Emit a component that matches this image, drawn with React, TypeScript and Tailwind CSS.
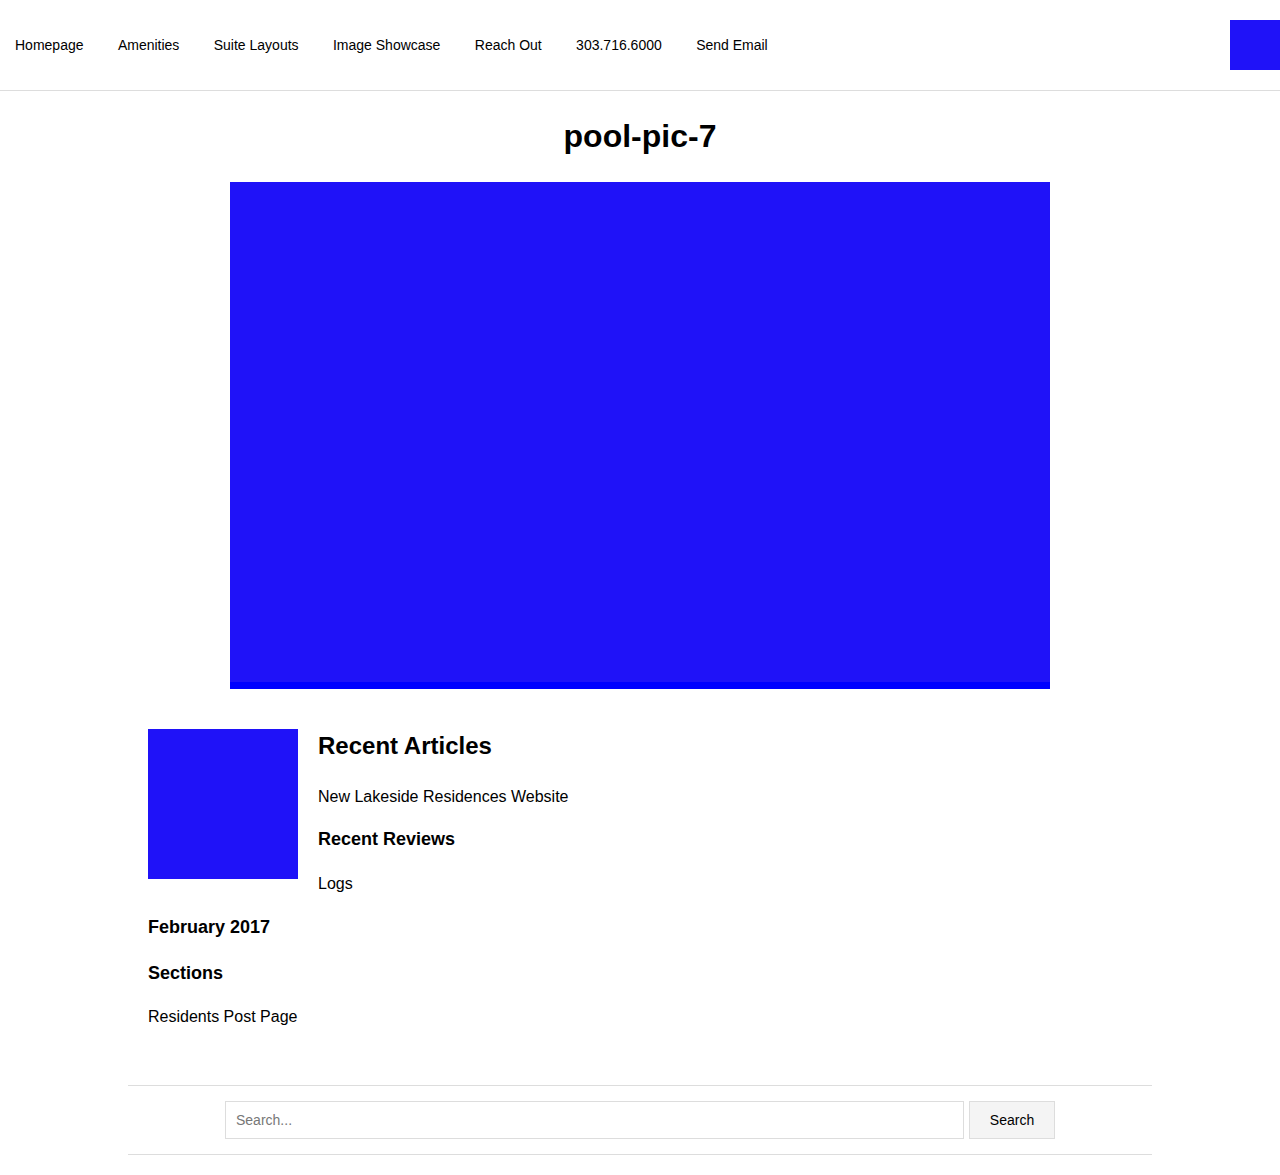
const navLinks = [
  "Homepage",
  "Amenities",
  "Suite Layouts",
  "Image Showcase",
  "Reach Out",
  "303.716.6000",
  "Send Email",
];

export default function App() {
  return (
    <div className="min-h-[1175px] bg-white text-black font-['Liberation_Sans',Arial,sans-serif]">
      {/* Header */}
      <header className="flex h-[91px] items-center justify-between border-b border-[#dddddd]">
        <nav className="flex items-center gap-[4.4px]">
          {navLinks.map((link) => (
            <a key={link} href="#" className="px-[15px] text-[14px] leading-[20px] text-black">
              {link}
            </a>
          ))}
        </nav>
        <div className="h-[50px] w-[50px] bg-[#1f12f8]" />
      </header>

      <main className="flex flex-col items-center">
        <h1 className="mt-[26px] mb-[27px] text-[32px] font-bold leading-[38px]">pool-pic-7</h1>
        <div className="w-[820px]">
          <div className="h-[500px] bg-[#1f12f8]" />
          <div className="h-[7px] bg-[#0000ff]" />
        </div>
      </main>

      {/* Sidebar widgets */}
      <section className="mx-auto mt-[40px] w-[1024px] px-[20px]">
        <div className="flex gap-[20px]">
          <div className="h-[150px] w-[150px] shrink-0 bg-[#1f12f8]" />
          <div className="flex flex-col">
            <h2 className="mt-[3px] text-[24px] font-bold leading-[28px]">Recent Articles</h2>
            <a href="#" className="mt-[25px] text-[16px] leading-[24px]">New Lakeside Residences Website</a>
            <h3 className="mt-[18px] text-[18px] font-bold leading-[24px]">Recent Reviews</h3>
            <a href="#" className="mt-[21px] text-[16px] leading-[24px]">Logs</a>
          </div>
        </div>
        <h3 className="mt-[19px] text-[18px] font-bold leading-[24px]">February 2017</h3>
        <h3 className="mt-[22px] text-[18px] font-bold leading-[24px]">Sections</h3>
        <a href="#" className="mt-[20px] block text-[16px] leading-[24px]">Residents Post Page</a>
      </section>

      {/* Search footer */}
      <footer className="mx-auto mt-[56px] w-[1024px] border-y border-[#dddddd] py-[15px]">
        <form className="flex justify-center gap-[5px]" onSubmit={(e) => e.preventDefault()}>
          <input
            type="text"
            placeholder="Search..."
            className="h-[38px] w-[739px] border border-[#dddddd] px-[10px] text-[14px] text-black outline-none placeholder:text-[#777777]"
          />
          <button
            type="submit"
            className="h-[38px] w-[86px] border border-[#dddddd] bg-[#f4f4f4] text-[14px] text-black"
          >
            Search
          </button>
        </form>
      </footer>
    </div>
  );
}
